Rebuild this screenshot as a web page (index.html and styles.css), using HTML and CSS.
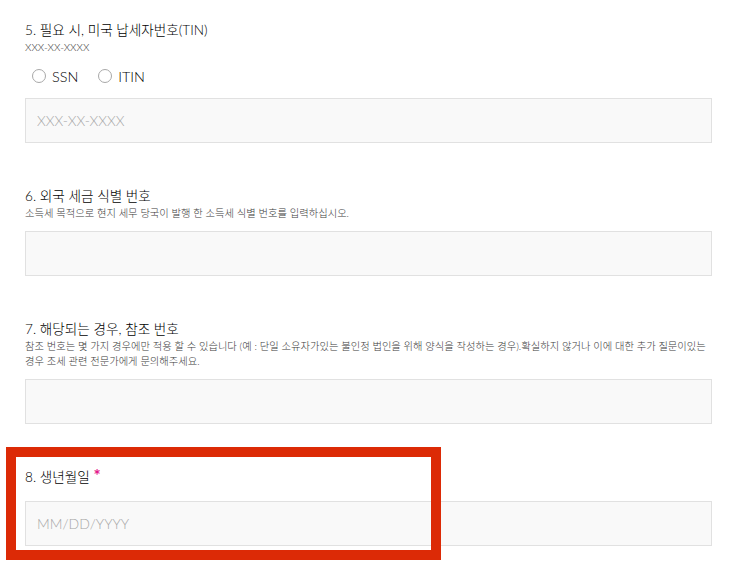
FILE: index.html
```html
<!DOCTYPE html>
<html lang="ko">
<head>
    <meta charset="UTF-8">
    <meta name="viewport" content="width=device-width, initial-scale=1.0">
    <title>납세자 정보</title>
    <link rel="stylesheet" href="styles.css">
</head>
<body>
    <form class="tax-form">
        <div class="field">
            <label class="field-label" for="tin">5. 필요 시, 미국 납세자번호(TIN)</label>
            <p class="hint">XXX-XX-XXXX</p>
            <div class="radio-row">
                <label class="radio"><input type="radio" name="tin-type"> SSN</label>
                <label class="radio"><input type="radio" name="tin-type"> ITIN</label>
            </div>
            <input type="text" id="tin" placeholder="XXX-XX-XXXX">
        </div>

        <div class="field">
            <label class="field-label" for="ftin">6. 외국 세금 식별 번호</label>
            <p class="hint">소득세 목적으로 현지 세무 당국이 발행 한 소득세 식별 번호를 입력하십시오.</p>
            <input type="text" id="ftin">
        </div>

        <div class="field">
            <label class="field-label" for="ref">7. 해당되는 경우, 참조 번호</label>
            <p class="hint">참조 번호는 몇 가지 경우에만 적용 할 수 있습니다 (예 : 단일 소유자가있는 불인정 법인을 위해 양식을 작성하는 경우).확실하지 않거나 이에 대한 추가 질문이있는 경우 조세 관련 전문가에게 문의해주세요.</p>
            <input type="text" id="ref">
        </div>

        <div class="field highlighted">
            <label class="field-label" for="dob">8. 생년월일 <span class="required">*</span></label>
            <input type="text" id="dob" placeholder="MM/DD/YYYY">
            <div class="callout"></div>
        </div>
    </form>
</body>
</html>
```

FILE: styles.css
```css
body {
    margin: 0;
    padding: 0;
    background: #ffffff;
    font-family: Lato, "Noto Sans CJK KR", sans-serif;
    color: #222222;
}
.tax-form {
    width: 687px;
    padding: 21px 0 0 25px;
}
.field {
    margin-bottom: 44px;
}
.field-label {
    display: block;
    font-size: 13.6px;
    font-weight: 300;
    line-height: 18px;
    color: #000000;
}
.required {
    display: inline-block;
    vertical-align: top;
    margin-top: -1px;
    font-size: 17px;
    font-weight: bold;
    color: #e3168a;
}
.hint {
    margin: 1px 0 0;
    font-size: 10.3px;
    font-weight: 300;
    line-height: 15px;
    color: #3c3c3c;
    word-break: keep-all;
}
.radio-row {
    display: flex;
    gap: 20px;
    margin: 11px 0 0 7px;
    height: 20px;
    align-items: center;
}
.radio {
    display: flex;
    align-items: center;
    font-size: 14.4px;
    font-weight: 300;
    color: #000000;
}
.radio input {
    appearance: none;
    width: 14px;
    height: 14px;
    margin: 0 6px 0 0;
    border: 1px solid #a8a8a8;
    border-radius: 50%;
    background: #ffffff;
}
input[type="text"] {
    display: block;
    width: 100%;
    height: 45px;
    margin-top: 10px;
    padding: 0 11px;
    border: 1px solid #e1e1e1;
    background: #f9f9f9;
    font-family: Lato, "Noto Sans CJK KR", sans-serif;
    font-size: 14px;
    font-weight: 300;
    box-sizing: border-box;
}
input[type="text"]::placeholder {
    color: #a6a6a6;
}
.radio-row + input[type="text"] {
    margin-top: 12px;
}
.highlighted {
    position: relative;
}
.highlighted input[type="text"] {
    margin-top: 15px;
}
.callout {
    position: absolute;
    left: -19px;
    top: -21px;
    width: 415px;
    height: 93px;
    border: 10px solid #dc2a06;
    pointer-events: none;
}
```
